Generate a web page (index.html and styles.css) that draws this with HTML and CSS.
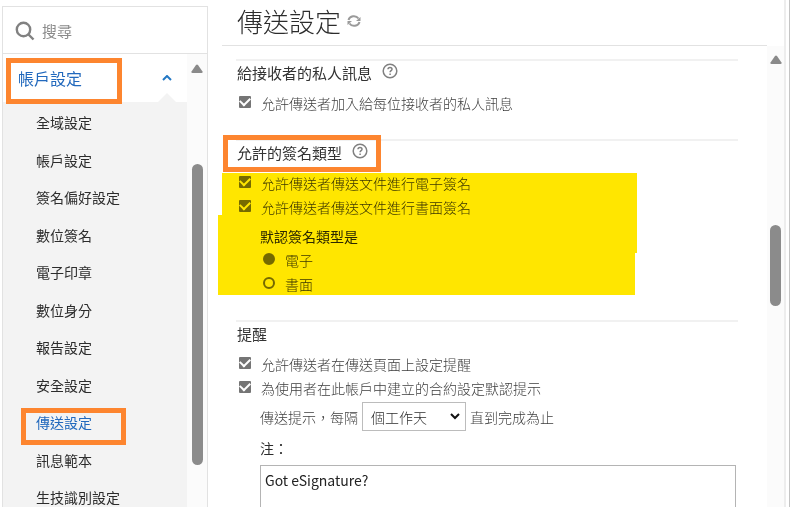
FILE: index.html
```
<!DOCTYPE html>
<html lang="zh-Hant">
  <head>
    <meta charset="UTF-8" />
    <meta name="viewport" content="width=device-width, initial-scale=1.0" />
    <title>傳送設定</title>
    <link rel="stylesheet" href="styles.css">
  </head>
  <body>
    <div class="page">
      <aside class="sidebar">
        <div class="search">
          <svg class="search-icon" viewBox="0 0 20 20" aria-hidden="true">
            <circle cx="8.5" cy="8.5" r="6.7" />
            <path d="M13.5 13.5l5 5" />
          </svg>
          <input type="text" placeholder="搜尋" aria-label="搜尋" />
        </div>
        <div class="sidebar-body">
          <nav class="menu">
            <button class="menu-title">
              <span class="marked marked-title">帳戶設定</span>
              <svg class="chevron" viewBox="0 0 10 6" aria-hidden="true">
                <path d="M1 5l4-4 4 4" />
              </svg>
            </button>
            <ul class="menu-list">
              <li><a href="#">全域設定</a></li>
              <li><a href="#">帳戶設定</a></li>
              <li><a href="#">簽名偏好設定</a></li>
              <li><a href="#">數位簽名</a></li>
              <li><a href="#">電子印章</a></li>
              <li><a href="#">數位身分</a></li>
              <li><a href="#">報告設定</a></li>
              <li><a href="#">安全設定</a></li>
              <li><a href="#" class="active marked marked-item">傳送設定</a></li>
              <li><a href="#">訊息範本</a></li>
              <li><a href="#">生技識別設定</a></li>
            </ul>
          </nav>
          <div class="scrollbar">
            <svg class="scroll-up" viewBox="0 0 12 9" aria-hidden="true">
              <path d="M5 1Q6 0 7 1L11.5 7.5Q12 9 10.5 9H1.5Q0 9 .5 7.5Z" />
            </svg>
            <div class="scroll-thumb thumb-menu"></div>
          </div>
        </div>
      </aside>

      <main class="main">
        <header class="main-header">
          <h1>傳送設定</h1>
          <button class="icon-button" aria-label="重新整理">
            <svg class="refresh" viewBox="0 0 14 14" aria-hidden="true">
              <path class="arc" d="M1.5 6A5.5 5 0 0 1 11.5 4.500M12.500 8A5.500 5 0 0 1 2.500 9.500" />
              <path d="M13.500 3v4h-4.500zM.5 11V7h4.500z" />
            </svg>
          </button>
        </header>

        <div class="main-body">
          <div class="settings">
            <section class="section">
              <div class="section-title">
                <h2>給接收者的私人訊息</h2>
                <button class="icon-button help" aria-label="說明">
                  <svg viewBox="0 0 16 16" aria-hidden="true">
                    <circle cx="8" cy="8" r="6.8" />
                    <path d="M6 6.3C6 3.8 10 3.8 10 6.2C10 7.6 8.1 7.7 8.1 9.3M8.1 10.5v1.5" />
                  </svg>
                </button>
              </div>
              <label class="option"><input type="checkbox" checked />允許傳送者加入給每位接收者的私人訊息</label>
            </section>

            <section class="section">
              <div class="section-title">
                <span class="marked marked-heading">
                  <h2>允許的簽名類型</h2>
                  <button class="icon-button help" aria-label="說明">
                    <svg viewBox="0 0 16 16" aria-hidden="true">
                      <circle cx="8" cy="8" r="6.8" />
                      <path d="M6 6.3C6 3.8 10 3.8 10 6.2C10 7.6 8.1 7.7 8.1 9.3M8.1 10.5v1.5" />
                    </svg>
                  </button>
                </span>
              </div>
              <div class="highlighted">
                <label class="option"><input type="checkbox" checked />允許傳送者傳送文件進行電子簽名</label>
                <label class="option"><input type="checkbox" checked />允許傳送者傳送文件進行書面簽名</label>
                <fieldset class="default-type">
                  <legend>默認簽名類型是</legend>
                  <label class="option"><input type="radio" name="type" checked />電子</label>
                  <label class="option"><input type="radio" name="type" />書面</label>
                </fieldset>
              </div>
            </section>

            <section class="section">
              <div class="section-title">
                <h2>提醒</h2>
              </div>
              <label class="option"><input type="checkbox" checked />允許傳送者在傳送頁面上設定提醒</label>
              <label class="option"><input type="checkbox" checked />為使用者在此帳戶中建立的合約設定默認提示</label>
              <div class="reminder">
                <div class="frequency">
                  <label for="frequency">傳送提示，每隔</label>
                  <span class="select">
                    <select id="frequency">
                      <option>個工作天</option>
                    </select>
                    <svg class="select-arrow" viewBox="0 0 10 7" aria-hidden="true">
                      <path d="M1 1l4 4 4-4" />
                    </svg>
                  </span>
                  <span>直到完成為止</span>
                </div>
                <label class="note-label" for="note">注：</label>
                <textarea id="note" rows="3">Got eSignature?</textarea>
              </div>
            </section>
          </div>
          <div class="scrollbar scrollbar-main">
            <svg class="scroll-up" viewBox="0 0 12 9" aria-hidden="true">
              <path d="M5 1Q6 0 7 1L11.5 7.5Q12 9 10.5 9H1.5Q0 9 .5 7.5Z" />
            </svg>
            <div class="scroll-thumb thumb-main"></div>
          </div>
        </div>
      </main>
    </div>
  </body>
</html>
```
FILE: styles.css
```
* {
  box-sizing: border-box;
}

body {
  margin: 0;
  background: #fff;
  color: #2c2c2c;
  font-family: "Noto Sans CJK TC", sans-serif;
  font-size: 14px;
  line-height: 24px;
}

button,
input,
select,
textarea {
  font: inherit;
  color: inherit;
}

h1,
h2 {
  margin: 0;
}

.page {
  display: flex;
  height: 100vh;
  padding: 0 7px 1px 2px;
  overflow: hidden;
}

/* Sidebar */
.sidebar {
  flex: 0 0 206px;
  display: flex;
  flex-direction: column;
  min-width: 0;
  margin-top: 6px;
  border: 1px solid #e2e2e2;
  border-bottom: none;
}

.search {
  flex: none;
  display: flex;
  align-items: center;
  gap: 7px;
  height: 47px;
  padding: 2px 12px 0;
  border-bottom: 1px solid #e2e2e2;
}

.search-icon {
  flex: none;
  width: 20px;
  height: 20px;
  fill: none;
  stroke: #818181;
  stroke-width: 2.4;
}

.search input {
  flex: 1;
  width: 100%;
  min-width: 0;
  padding: 0;
  border: none;
  outline: none;
  font-size: 15px;
}

.search input::placeholder {
  color: #8a8a8a;
}

.sidebar-body {
  flex: 1;
  display: flex;
  min-height: 0;
}

.menu {
  flex: 1;
  overflow: hidden;
  background: #f3f3f3;
}

.menu-title {
  position: relative;
  display: flex;
  align-items: center;
  justify-content: space-between;
  width: 100%;
  height: 48px;
  padding: 0 15px;
  border: none;
  background: #fff;
  color: #2269bd;
  font-size: 16px;
  text-align: left;
}

.menu-title::after {
  content: "";
  position: absolute;
  right: 11px;
  bottom: 0;
  border: 9px solid transparent;
  border-top: none;
  border-bottom-color: #f3f3f3;
}

.chevron {
  width: 10px;
  height: 6px;
  fill: none;
  stroke: #2378c4;
  stroke-width: 2;
}

.menu-list {
  margin: 0;
  padding: 2px 0 0 33px;
  list-style: none;
}

.menu-list li {
  line-height: 37px;
}

.menu-list li:nth-child(even) {
  line-height: 38px;
}

.menu-list a {
  color: #2c2c2c;
  text-decoration: none;
}

.menu-list a.active {
  color: #2269bd;
}

/* Orange frames laid over the key labels */
.marked {
  position: relative;
}

.marked::after {
  content: "";
  position: absolute;
  border: 5px solid #fd852f;
  pointer-events: none;
}

.marked-title::after {
  inset: -8px -40px -14px -12px;
  z-index: 1;
}

.marked-item::after {
  inset: -4px -34px -13px -15px;
}

.marked-heading {
  display: flex;
  align-items: center;
  gap: 10px;
}

.marked-heading::after {
  inset: -6px -13px -7px -14px;
}

/* Scrollbars */
.scrollbar {
  flex: 0 0 20px;
  display: flex;
  flex-direction: column;
  align-items: center;
  padding-top: 10px;
  background: #fbfbfb;
}

.scrollbar-main {
  flex-basis: 17px;
  padding-top: 9px;
}

.scroll-up {
  flex: none;
  width: 12px;
  height: 9px;
  fill: #8a8a8a;
}

.scroll-thumb {
  width: 11px;
  border-radius: 6px;
  background: #8b8b8b;
}

.thumb-menu {
  height: 68%;
  margin-top: 91px;
}

.thumb-main {
  height: 81px;
  margin-top: 161px;
}

/* Main column */
.main {
  flex: 1;
  display: flex;
  flex-direction: column;
  min-width: 0;
  margin-left: 10px;
  border-right: 2px solid #ededed;
  box-shadow: 3px 0 #fff, 4px 0 #c4c4c4;
}

.main-header {
  flex: none;
  display: flex;
  align-items: center;
  gap: 6px;
  height: 46px;
  margin: 0 17px 0 4px;
  padding: 0 0 4px 15px;
  border-bottom: 1px solid #e2e2e2;
}

.main-header h1 {
  font-size: 26px;
  font-weight: 300;
  line-height: 40px;
}

.icon-button {
  display: flex;
  padding: 0;
  border: none;
  background: none;
}

.refresh {
  width: 14px;
  height: 14px;
  fill: #9a9a9a;
}

.refresh .arc {
  fill: none;
  stroke: #9a9a9a;
  stroke-width: 2;
}

.main-body {
  flex: 1;
  display: flex;
  min-height: 0;
}

.settings {
  flex: 1;
  min-width: 0;
  padding: 13px 29px 0 18px;
  overflow: hidden;
}

.section {
  margin-bottom: 24px;
  border-top: 2px solid #f1f1f1;
}

.section-title {
  display: flex;
  align-items: center;
  gap: 10px;
  height: 24px;
  margin-bottom: 6px;
  padding-left: 1px;
}

.section-title h2 {
  color: #333;
  font-size: 15px;
  font-weight: 400;
}

.help {
  padding-bottom: 4px;
}

.help svg {
  width: 16px;
  height: 16px;
  fill: none;
  stroke: #808080;
  stroke-width: 1.5;
}

.option {
  display: flex;
  align-items: center;
  gap: 10px;
  padding-left: 3px;
  color: #3c3c3c;
  font-weight: 300;
}

.option input {
  appearance: none;
  flex: none;
  width: 12px;
  height: 12px;
  margin: 0 0 3px;
}

.option input[type="checkbox"] {
  display: grid;
  place-items: center;
  border-radius: 1px;
  background: #757575;
}

.option input[type="checkbox"]:checked::before {
  content: "";
  width: 8px;
  height: 5px;
  margin-bottom: 2px;
  border: solid #fff;
  border-width: 0 0 2px 2px;
  transform: rotate(-45deg);
}

.option input[type="radio"] {
  border: 2px solid #757575;
  border-radius: 50%;
}

.option input[type="radio"]:checked {
  background: #757575;
}

/* Marker strokes: two overlapping bands */
.highlighted {
  position: relative;
}

.highlighted::after {
  content: "";
  position: absolute;
  inset: 2px 101px 1px -18px;
  background: #ffe600;
  mix-blend-mode: multiply;
  clip-path: polygon(
    4px 0, 100% 0, 100% 80px, calc(100% - 2px) 80px,
    calc(100% - 2px) 100%, 0 100%, 0 42px, 4px 42px
  );
  pointer-events: none;
}

.default-type {
  margin: 0;
  padding: 5px 0 0 24px;
  border: none;
}

.default-type legend {
  float: left;
  width: 100%;
  padding: 0;
}

.default-type .option {
  clear: both;
}

.reminder {
  padding-left: 24px;
}

.frequency {
  display: flex;
  align-items: center;
  gap: 4px;
  margin-top: 2px;
  color: #3c3c3c;
  font-weight: 300;
}

.select {
  display: flex;
  align-items: center;
}

.select select {
  appearance: none;
  width: 104px;
  height: 29px;
  padding: 0 8px;
  border: 1px solid #bcbcbc;
  border-radius: 0;
  background: #fff;
  color: #2c2c2c;
}

.select-arrow {
  width: 10px;
  height: 7px;
  margin-left: -16px;
  margin-right: 6px;
  fill: none;
  stroke: #111;
  stroke-width: 2;
  pointer-events: none;
}

.note-label {
  display: block;
  margin: 5px 0;
}

.reminder textarea {
  display: block;
  width: calc(100% - 2px);
  padding: 2px 4px;
  border: 1px solid #b4b4b4;
  outline: none;
  color: #222;
  resize: none;
}
```
